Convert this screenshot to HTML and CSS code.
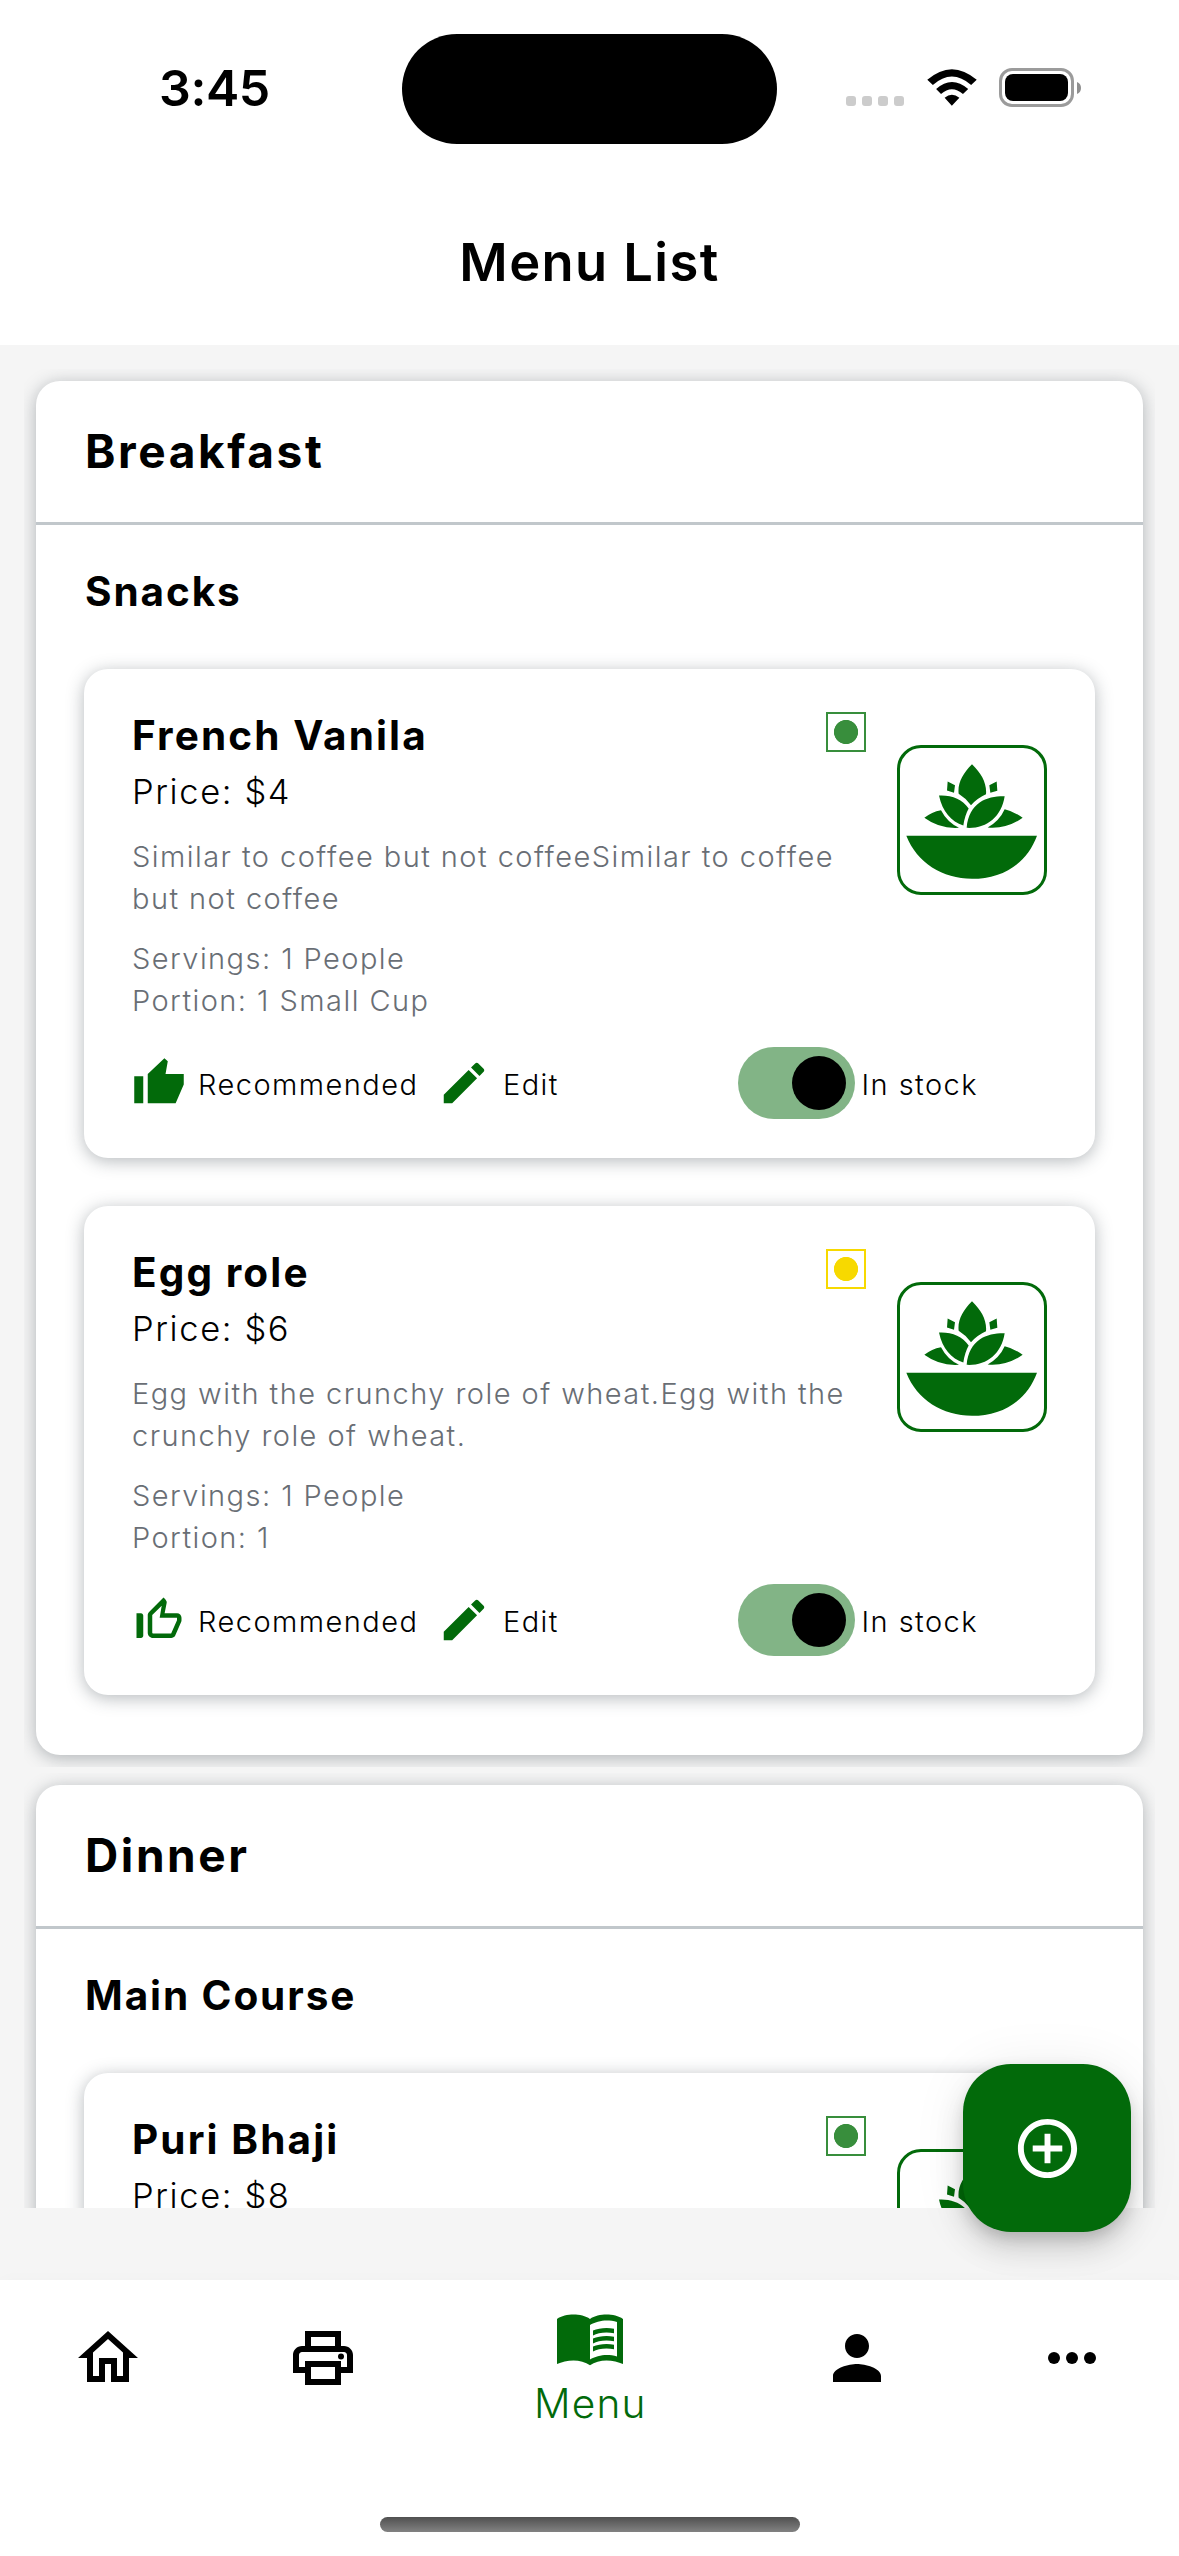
FILE: index.html
```html
<!DOCTYPE html>
<html lang="en">
<head>
<meta charset="utf-8">
<title>Menu List</title>
<link rel="stylesheet" href="styles.css">
</head>
<body>
<svg class="sprite" aria-hidden="true">
  <symbol id="thumb" viewBox="0 0 24 24"><path d="M1 21h4V9H1zM23 8h-8.1l1-5.7L14.4 1 7 8v13h12.4L23 12.7z"/></symbol>
  <symbol id="thumb-outline" viewBox="0 0 24 24"><path fill-rule="evenodd" d="M2 20h2c.55 0 1-.45 1-1v-9c0-.55-.45-1-1-1H2zm19.83-7.12c.11-.25.17-.52.17-.8V11c0-1.1-.9-2-2-2h-5.5l.92-4.65c.05-.22.02-.46-.08-.66-.23-.45-.52-.86-.88-1.22L14 2 7.59 8.41C7.21 8.79 7 9.3 7 9.83v7.84C7 18.95 8.05 20 9.34 20h8.11c.7 0 1.36-.37 1.72-.97zM9 9.83l4.2-4.2L12.3 11H20v1.08L17.4 18H9.34c-.19 0-.34-.15-.34-.33z"/></symbol>
  <symbol id="edit" viewBox="0 0 24 24"><path d="M3 17.25V21h3.75L17.81 9.94l-3.75-3.75zM20.71 7.04c.39-.39.39-1.02 0-1.41l-2.34-2.34c-.39-.39-1.02-.39-1.41 0l-1.83 1.83 3.75 3.75z"/></symbol>
  <symbol id="lotus" viewBox="52 45.500 450 450">
    <path d="M277 103C250 130 233 160 237 192Q258 205 274 226Q292 205 319 193C322 160 305 130 277 103zM204 155L226 166L223 189L202 182zM351 155L329 166L332 189L353 183zM178 197C215 195 248 208 267 236Q255 258 251 287C215 275 188 245 178 197zM375 199C325 198 268 215 261 294C320 297 365 262 375 199zM134 264Q156 246 184 241Q202 276 238 294Q180 298 134 264zM429 264Q402 244 375 238Q360 272 324 293Q382 298 429 264zM80 318H472C440 405 365 447 277 447S112 400 80 318z"/>
  </symbol>
</svg>

<div class="screen">
  <header class="status">
    <span class="time">3:45</span>
    <span class="island"></span>
    <span class="indicators">
      <span class="signal"><i></i><i></i><i></i><i></i></span>
      <svg class="wifi" viewBox="259 41 151 113"><path d="M259 74Q334 9 410 74L393 90Q334 38 276 90zM286 102Q334 59 384 102L368 117Q334 88 301 117zM312 129Q334 111 357 129L334 153z"/></svg>
      <span class="battery"><span class="shell"><span class="charge"></span></span><svg class="cap" viewBox="0 0 4 12"><path d="M0 0Q4 1.500 4 6T0 12z"/></svg></span>
    </span>
  </header>
  <h1 class="appbar">Menu List</h1>

  <main class="content">
    <div class="list">
      <div class="slot">
        <section class="group">
          <h2 class="group-title">Breakfast</h2>
          <h3 class="category">Snacks</h3>
          <div class="dishes">
            <article class="dish">
              <div class="summary">
                <div class="info">
                  <div class="heading"><h4 class="name">French Vanila</h4><span class="mark"></span></div>
                  <p class="price">Price: $4</p>
                  <p class="text">Similar to coffee but not coffeeSimilar to coffee but not coffee</p>
                  <p class="text portion">Servings: 1 People<br>Portion: 1 Small Cup</p>
                </div>
                <span class="logo"><svg><use href="#lotus"/></svg></span>
              </div>
              <div class="actions">
                <span class="action"><svg class="icon"><use href="#thumb"/></svg><span>Recommended</span></span>
                <span class="action"><svg class="icon"><use href="#edit"/></svg><span>Edit</span></span>
                <span class="stock"><span class="switch"><i></i></span><span>In stock</span></span>
              </div>
            </article>
            <article class="dish">
              <div class="summary">
                <div class="info">
                  <div class="heading"><h4 class="name">Egg role</h4><span class="mark egg"></span></div>
                  <p class="price">Price: $6</p>
                  <p class="text">Egg with the crunchy role of wheat.Egg with the crunchy role of wheat.</p>
                  <p class="text portion">Servings: 1 People<br>Portion: 1</p>
                </div>
                <span class="logo"><svg><use href="#lotus"/></svg></span>
              </div>
              <div class="actions">
                <span class="action"><svg class="icon"><use href="#thumb-outline"/></svg><span>Recommended</span></span>
                <span class="action"><svg class="icon"><use href="#edit"/></svg><span>Edit</span></span>
                <span class="stock"><span class="switch"><i></i></span><span>In stock</span></span>
              </div>
            </article>
          </div>
        </section>
      </div>
      <div class="slot">
        <section class="group">
          <h2 class="group-title">Dinner</h2>
          <h3 class="category">Main Course</h3>
          <div class="dishes">
            <article class="dish">
              <div class="summary">
                <div class="info">
                  <div class="heading"><h4 class="name">Puri Bhaji</h4><span class="mark"></span></div>
                  <p class="price">Price: $8</p>
                </div>
                <span class="logo"><svg><use href="#lotus"/></svg></span>
              </div>
            </article>
          </div>
        </section>
      </div>
    </div>
    <button class="fab" aria-label="Add"><svg viewBox="0 0 24 24"><path d="M13 7h-2v4H7v2h4v4h2v-4h4v-2h-4zM12 2C6.480 2 2 6.480 2 12s4.480 10 10 10 10-4.480 10-10S17.520 2 12 2zm0 18c-4.410 0-8-3.590-8-8s3.590-8 8-8 8 3.590 8 8-3.590 8-8 8z"/></svg></button>
  </main>

  <nav class="nav">
    <div class="tabs">
      <span class="tab"><svg viewBox="0 0 24 24"><path d="M12 5.690l5 4.500V18h-2v-6H9v6H7v-7.810l5-4.500M12 3L2 12h3v8h6v-6h2v6h6v-8h3z"/></svg></span>
      <span class="tab"><svg viewBox="0 0 24 24"><path d="M19 8h-1V3H6v5H5c-1.660 0-3 1.340-3 3v6h4v4h12v-4h4v-6c0-1.660-1.340-3-3-3zM8 5h8v3H8zm8 12v2H8v-4h8zm2-2v-2H6v2H4v-4c0-.550.450-1 1-1h14c.550 0 1 .450 1 1v4z"/><circle cx="18" cy="11.500" r="1"/></svg></span>
      <span class="tab active"><svg viewBox="0 0 24 24"><path d="M17.500 4.500c-1.950 0-4.050.400-5.500 1.500-1.450-1.100-3.550-1.500-5.500-1.500S2.450 4.900 1 6v15c1.450-.700 3.550-1.200 5.500-1.200s4.050.500 5.500 1.650c1.450-1.150 3.550-1.650 5.500-1.650s4.050.500 5.500 1.200V6c-1.450-1.100-3.550-1.500-5.500-1.500zM21 18.500c-1.100-.350-2.300-.500-3.500-.500-1.700 0-4.150.650-5.500 1.500V8c1.350-.850 3.800-1.500 5.500-1.500 1.200 0 2.400.150 3.500.500z"/><path d="M17.500 10.500c.880 0 1.730.090 2.500.260V9.240C19.210 9.090 18.360 9 17.500 9c-1.700 0-3.240.290-4.500.830v1.660c1.130-.640 2.700-.990 4.500-.990zM13 12.490v1.660c1.130-.640 2.700-.990 4.500-.990.880 0 1.730.090 2.500.260V11.900c-.790-.150-1.640-.240-2.500-.240-1.700 0-3.240.300-4.500.830zM17.500 14.330c-1.700 0-3.240.290-4.500.830v1.660c1.130-.640 2.700-.990 4.500-.990.880 0 1.730.090 2.500.260v-1.520c-.790-.160-1.640-.240-2.500-.240z"/></svg><span>Menu</span></span>
      <span class="tab"><svg viewBox="0 0 24 24"><path d="M12 12c2.210 0 4-1.790 4-4s-1.790-4-4-4-4 1.790-4 4 1.790 4 4 4zm0 2c-2.670 0-8 1.340-8 4v2h16v-2c0-2.660-5.330-4-8-4z"/></svg></span>
      <span class="tab"><svg viewBox="0 0 24 24"><circle cx="6" cy="12" r="2"/><circle cx="12" cy="12" r="2"/><circle cx="18" cy="12" r="2"/></svg></span>
    </div>
    <span class="home-indicator"></span>
  </nav>
</div>
</body>
</html>
```
FILE: styles.css
```css
* { box-sizing: border-box; }
body { margin: 0; background: #fff; }
h1, h2, h3, h4, p { margin: 0; font-weight: 365; }
svg { display: block; fill: currentColor; }
.sprite { display: none; }

.screen {
  display: flex;
  flex-direction: column;
  width: 1179px;
  height: 2556px;
  overflow: hidden;
  font-family: Inter, "Liberation Sans", sans-serif;
  font-weight: 365;
  color: #000;
}

/* Status bar */
.status {
  display: grid;
  grid-template-columns: 402px 375px 402px;
  height: 177px;
  padding-top: 34px;
  align-items: start;
}
.time {
  padding-left: 159px;
  font-size: 50px;
  font-weight: 600;
  letter-spacing: -.4px;
  line-height: 108px;
}
.island { height: 110px; border-radius: 55px; background: #000; }
.indicators {
  display: flex;
  align-items: flex-end;
  height: 73px;
  padding-left: 69px;
}
.signal { display: flex; gap: 6px; margin: 0 23px 1px 0; }
.signal i { width: 10px; height: 10px; border-radius: 3px; background: #ccc; }
.wifi { width: 50px; height: 37px; margin: 0 22px 1px 0; }
.battery { display: flex; align-items: center; gap: 3px; }
.shell {
  width: 75px;
  height: 39px;
  padding: 3px;
  border: 3px solid #9b9b9b;
  border-radius: 13px;
}
.charge { display: block; height: 27px; border-radius: 8px; background: #000; }
.cap { width: 4px; height: 12px; color: #8f8f8f; }

.appbar {
  height: 168px;
  text-align: center;
  font-size: 52.5px;
  font-weight: 630;
  letter-spacing: 1.4px;
  line-height: 170px;
}

/* Menu list */
.content {
  position: relative;
  flex: 1;
  min-height: 0;
  background: #f5f5f5;
}
.list {
  display: flex;
  flex-direction: column;
  gap: 6px;
  height: 1863px;
  padding: 24px 24px 0;
  overflow: hidden;
}
.slot { flex: none; padding: 12px; overflow: hidden; }
.group, .dish {
  border-radius: 24px;
  background: #fff;
  box-shadow: 0 3px 17px rgba(50, 60, 70, .36);
}
.group { padding-bottom: 60px; }
.group-title {
  height: 144px;
  padding-left: 49px;
  border-bottom: 3px solid #c1c7cb;
  font-size: 46px;
  font-weight: 670;
  letter-spacing: 2.6px;
  line-height: 141px;
}
.category {
  height: 144px;
  padding-left: 49px;
  font-size: 40.5px;
  font-weight: 670;
  letter-spacing: 1.9px;
  line-height: 133px;
}
.dishes { display: flex; flex-direction: column; gap: 48px; padding: 0 48px; }
.dish { height: 489px; padding: 42px 48px 39px; }
.summary { display: flex; justify-content: space-between; height: 310px; }
.info { width: 734px; }
.heading { display: flex; justify-content: space-between; height: 48px; }
.name {
  font-size: 40.5px;
  font-weight: 670;
  letter-spacing: 2.1px;
  line-height: 49px;
}
.mark {
  width: 40px;
  height: 40px;
  margin-top: 1px;
  border: 2px solid #388e3c;
  background: radial-gradient(circle, #388e3c 11.7px, transparent 12.4px);
}
.mark.egg {
  border-color: #f7d900;
  background: radial-gradient(circle, #f7d900 11.7px, transparent 12.4px);
}
.price {
  margin-top: 9px;
  font-size: 34.5px;
  letter-spacing: 1.6px;
  line-height: 48px;
}
.text {
  margin-top: 20px;
  font-size: 29px;
  letter-spacing: 1.44px;
  line-height: 42px;
  color: #696e75;
}
.portion { margin-top: 18px; }
.logo {
  flex: none;
  width: 150px;
  height: 150px;
  margin-top: 34px;
  border: 3px solid #026a0a;
  border-radius: 24px;
  color: #026a0a;
}
.logo svg { width: 150px; height: 150px; margin: -3px; }
.actions {
  display: grid;
  grid-template-columns: 305px 300.5px auto;
  align-items: center;
  height: 72px;
  margin-top: 26px;
  font-size: 29px;
  letter-spacing: 1.45px;
  line-height: 42px;
}
.actions span span { padding-top: 4px; }
.action, .stock { display: flex; align-items: center; }
.action { gap: 12px; }
.icon { width: 54px; height: 54px; color: #026a0a; }
.stock { gap: 7px; }
.actions .switch {
  display: flex;
  justify-content: flex-end;
  width: 117px;
  height: 72px;
  padding: 9px;
  border-radius: 36px;
  background: #82b486;
}
.switch i { width: 54px; height: 54px; border-radius: 50%; background: #000; }

/* Floating button overlaps the end of the list */
.fab {
  position: absolute;
  right: 48px;
  bottom: 48px;
  display: grid;
  place-items: center;
  width: 168px;
  height: 168px;
  padding: 0;
  border: 0;
  border-radius: 48px;
  background: #026a0a;
  color: #fff;
  box-shadow: 0 9px 15px -3px rgba(0, 0, 0, .16), 0 18px 30px rgba(0, 0, 0, .12), 0 3px 54px rgba(0, 0, 0, .08);
}
.fab svg { width: 71px; height: 71px; }

/* Bottom navigation */
.nav {
  position: relative;
  display: flex;
  flex-direction: column;
  justify-content: space-between;
  align-items: center;
  height: 276px;
  padding-bottom: 24px;
  background: #fff;
  box-shadow: 0 0 16px rgba(0, 0, 0, .02);
}
.tabs { display: grid; grid-template-columns: 215.5px 215.5px 318.5px 215px 214.5px; height: 156px; }
.tab { display: flex; flex-direction: column; align-items: center; justify-content: center; }
.tab svg { width: 72px; height: 72px; }
.active {
  justify-content: flex-start;
  gap: 5px;
  padding-top: 21px;
  color: #026a0a;
  font-size: 40.6px;
  letter-spacing: 1.2px;
  line-height: 50px;
}
.active span { padding-top: 1px; }
.home-indicator {
  width: 420px;
  height: 15px;
  border-radius: 7.5px;
  background: linear-gradient(#505050, #828282);
}
```
